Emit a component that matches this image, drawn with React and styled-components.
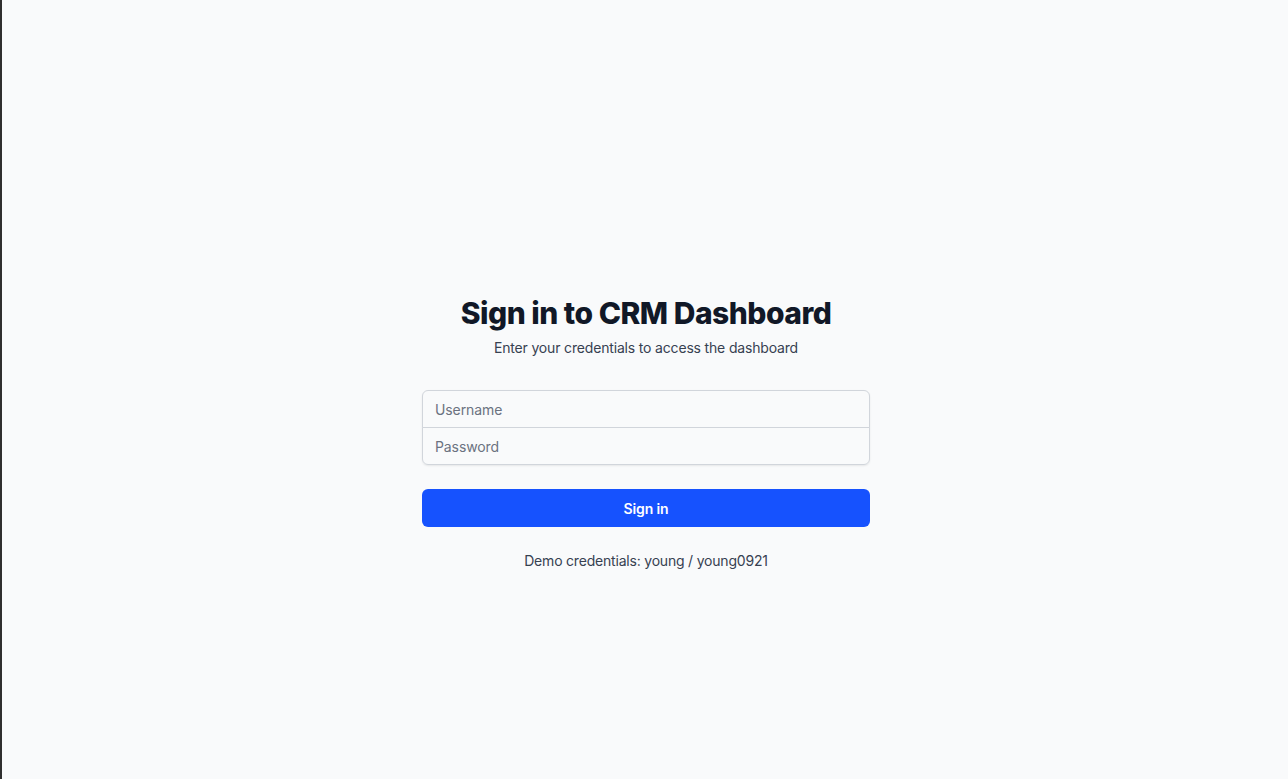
import React, { useState } from "react";
import styled, { createGlobalStyle } from "styled-components";

const GlobalStyle = createGlobalStyle`
  html, body {
    margin: 0;
    padding: 0;
    background-color: #f9fafb;
    font-family: Inter, "Noto Sans", "Liberation Sans", sans-serif;
  }
  * {
    box-sizing: border-box;
  }
`;

const Page = styled.div`
  min-height: 100vh;
  border-left: 2px solid #2f2f2f;
  display: flex;
  align-items: center;
  justify-content: center;
  padding-top: 87px;
  padding-left: 2px;
`;

const Card = styled.div`
  width: 448px;
  display: flex;
  flex-direction: column;
`;

const Title = styled.h2`
  margin: 0;
  text-align: center;
  font-size: 30px;
  line-height: 36px;
  font-weight: 800;
  color: #111827;
  letter-spacing: -0.5px;
`;

const Subtitle = styled.p`
  margin: 7px 0 0;
  text-align: center;
  font-size: 14px;
  line-height: 20px;
  color: #374151;
  letter-spacing: -0.17px;
`;

const Form = styled.form`
  margin-top: 32px;
  display: flex;
  flex-direction: column;
  gap: 24px;
`;

const InputGroup = styled.div`
  display: flex;
  flex-direction: column;
  border-radius: 6px;
  box-shadow: 0 1px 2px rgba(0, 0, 0, 0.08);
`;

const Input = styled.input`
  display: block;
  width: 100%;
  height: 38px;
  padding: 8px 12px;
  font-family: inherit;
  font-size: 14px;
  line-height: 20px;
  letter-spacing: -0.1px;
  color: #111827;
  background: transparent;
  border: 1px solid #d1d5db;
  border-radius: ${(p) => (p.$first ? "6px 6px 0 0" : "0 0 6px 6px")};
  margin-top: ${(p) => (p.$first ? "0" : "-1px")};
  outline: none;

  &::placeholder {
    color: #6b7280;
  }
`;

const Button = styled.button`
  height: 38px;
  width: 100%;
  border: none;
  border-radius: 6px;
  background-color: #1652fe;
  color: #ffffff;
  font-family: inherit;
  font-size: 14px;
  font-weight: 600;
  letter-spacing: -0.1px;
  cursor: pointer;
`;

const Hint = styled.p`
  margin: 0;
  text-align: center;
  font-size: 14px;
  line-height: 20px;
  color: #374151;
  letter-spacing: -0.2px;
`;

const App = () => {
  const [username, setUsername] = useState("");
  const [password, setPassword] = useState("");

  return (
    <>
      <GlobalStyle />
      <Page>
        <Card>
          <Title>Sign in to CRM Dashboard</Title>
          <Subtitle>Enter your credentials to access the dashboard</Subtitle>
          <Form onSubmit={(e) => e.preventDefault()}>
            <InputGroup>
              <Input
                $first
                type="text"
                placeholder="Username"
                value={username}
                onChange={(e) => setUsername(e.target.value)}
              />
              <Input
                type="password"
                placeholder="Password"
                value={password}
                onChange={(e) => setPassword(e.target.value)}
              />
            </InputGroup>
            <Button type="submit">Sign in</Button>
            <Hint>Demo credentials: young / young0921</Hint>
          </Form>
        </Card>
      </Page>
    </>
  );
};

export default App;
